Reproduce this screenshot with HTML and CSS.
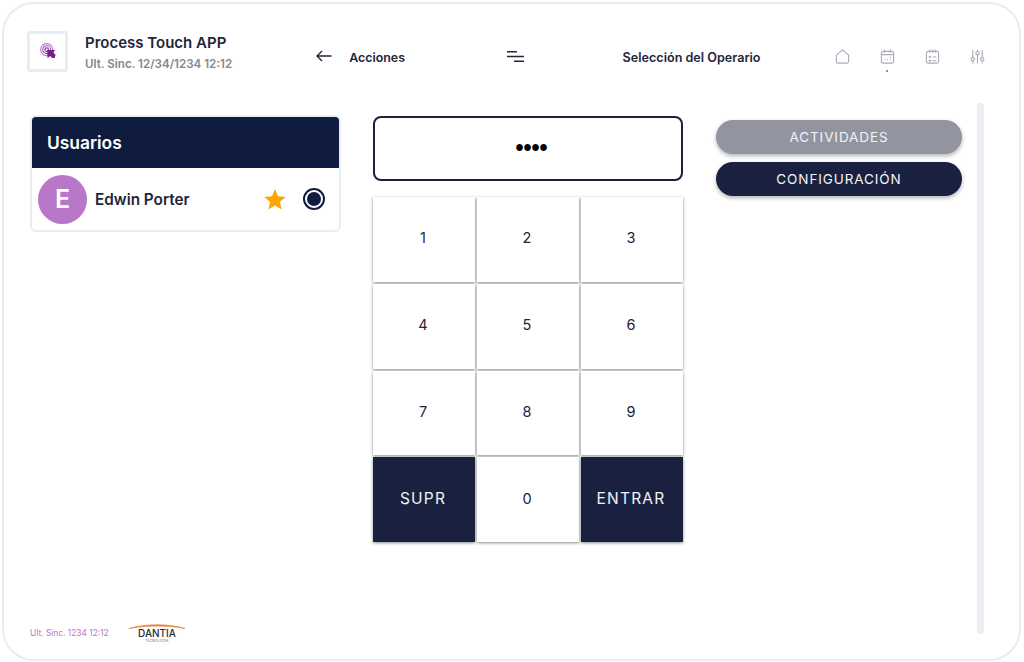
FILE: index.html
```html
<!DOCTYPE html>
<html lang="es">
<head>
    <meta charset="UTF-8">
    <title>Process Touch APP</title>
    <link rel="stylesheet" href="styles.css">
</head>
<body>
    <div class="frame">
        <header class="topbar">
            <div class="brand">
                <div class="logo-box">
                    <svg width="16" height="16" viewBox="0 0 18 18" fill="none">
                        <circle cx="7.5" cy="7.5" r="6.8" stroke="#c07ad2" stroke-width="1.3"/>
                        <circle cx="7.5" cy="7.5" r="4.4" stroke="#a94fc0" stroke-width="1.3"/>
                        <circle cx="7.5" cy="7.5" r="2" stroke="#8d3fa3" stroke-width="1.3"/>
                        <path d="M8 8h9l-2 2.600 2.500 2.600-1 3.800h-3l-1.800-2.300L8.500 17z" fill="#6f1f86"/>
                    </svg>
                </div>
                <div class="brand-text">
                    <div class="app-name">Process Touch APP</div>
                    <div class="app-sync">Ult. Sinc. 12/34/1234 12:12</div>
                </div>
            </div>
            <div class="actions">
                <svg width="16" height="12" viewBox="0 0 16 12" fill="none" stroke="#23253a" stroke-width="1.4">
                    <path d="M15.500 6H1M6 1 1 6l5 5"/>
                </svg>
                <span class="actions-label">Acciones</span>
            </div>
            <svg class="menu-icon" width="17" height="11" viewBox="0 0 17 11" fill="none" stroke="#23253a" stroke-width="1.500">
                <path d="M0 .750h10M0 5.500h17M7 10.250h10"/>
            </svg>
            <div class="screen-title">Selección del Operario</div>
            <nav class="nav-icons">
                <div class="nav-item">
                    <svg width="15" height="15" viewBox="0 0 16 16" fill="none" stroke="#a9abbc" stroke-width="1.2">
                        <path d="M1.500 6.500 8 1l6.500 5.500V13a2 2 0 0 1-2 2h-9a2 2 0 0 1-2-2z"/>
                    </svg>
                </div>
                <div class="nav-item nav-active">
                    <svg width="15" height="15" viewBox="0 0 16 16" fill="none" stroke="#a9abbc" stroke-width="1.2">
                        <rect x="1.500" y="2.500" width="13" height="12.500" rx="2"/>
                        <path d="M1.500 6h13M5 .500v3.500M11 .500v3.500M4.500 11.500h1M7.500 11.500h1M10.500 9h1M10.500 11.500h1"/>
                    </svg>
                </div>
                <div class="nav-item">
                    <svg width="15" height="15" viewBox="0 0 16 16" fill="none" stroke="#a9abbc" stroke-width="1.2">
                        <rect x="1.500" y="2.500" width="13" height="12.500" rx="2"/>
                        <path d="M5 .500v3.500M8 .500v3.500M11 .500v3.500M4 8l1 1 1.500-1.500M8 8.500h4M4 12l1 1 1.500-1.500M8 12.500h4"/>
                    </svg>
                </div>
                <div class="nav-item">
                    <svg width="15" height="15" viewBox="0 0 16 16" fill="none" stroke="#a9abbc" stroke-width="1.2">
                        <path d="M3 1v8M3 13v2.500M8 1v1.500M8 6.500v9M13 1v8M13 13v2.500"/>
                        <circle cx="3" cy="11" r="1.800"/>
                        <circle cx="8" cy="4.500" r="1.800"/>
                        <circle cx="13" cy="11" r="1.800"/>
                    </svg>
                </div>
            </nav>
        </header>

        <main class="content">
            <section class="users">
                <div class="card">
                    <div class="card-head">Usuarios</div>
                    <div class="user-row">
                        <div class="avatar">E</div>
                        <div class="user-name">Edwin Porter</div>
                        <svg class="star" width="22" height="21" viewBox="0 0 22 21">
                            <path d="M11 0l3 7.300 7.700.6-5.900 5 1.900 7.600L11 16.400l-6.700 4.100 1.900-7.600-5.900-5L8 7.300z" fill="#ffa500"/>
                        </svg>
                        <div class="radio"><span class="radio-dot"></span></div>
                    </div>
                </div>
            </section>

            <section class="pad">
                <div class="pin-box">••••</div>
                <div class="keys">
                    <button class="key">1</button>
                    <button class="key">2</button>
                    <button class="key">3</button>
                    <button class="key">4</button>
                    <button class="key">5</button>
                    <button class="key">6</button>
                    <button class="key">7</button>
                    <button class="key">8</button>
                    <button class="key">9</button>
                    <button class="key key-dark">SUPR</button>
                    <button class="key">0</button>
                    <button class="key key-dark">ENTRAR</button>
                </div>
            </section>

            <section class="side">
                <button class="pill pill-muted">ACTIVIDADES</button>
                <button class="pill">CONFIGURACIÓN</button>
            </section>

            <div class="scroll-track"></div>
        </main>

        <footer class="bottom">
            <span class="sync-small">Ult. Sinc. 1234 12:12</span>
            <div class="dantia">
                <svg class="dantia-arc" width="56" height="6" viewBox="0 0 56 6" fill="none">
                    <path d="M0 5.500C16 .500 40 .500 56 5.500 40 2.200 16 2.200 0 5.500z" fill="#ee7b30" stroke="#ee7b30" stroke-width=".6"/>
                </svg>
                <span class="dantia-name">DANTIA</span>
                <span class="dantia-sub">TECNOLOGIA</span>
            </div>
        </footer>
    </div>
</body>
</html>
```

FILE: styles.css
```css
* {
    box-sizing: border-box;
}
html, body {
    margin: 0;
    height: 100%;
    background-color: #fff;
}
body {
    font-family: "Inter", "Liberation Sans", sans-serif;
    color: #23253a;
    overflow: hidden;
}
.frame {
    width: 1019px;
    height: 659px;
    margin: 2px 0 0 2px;
    border: 2px solid #e6eef3;
    border-radius: 32px;
    display: flex;
    flex-direction: column;
    padding: 25px 34px 0 23px;
}

/* top bar */
.topbar {
    display: flex;
    align-items: center;
    height: 44px;
    flex-shrink: 0;
}
.brand {
    display: flex;
    align-items: center;
    width: 290px;
}
.logo-box {
    width: 41px;
    height: 41px;
    border: 3px solid #e6eef3;
    border-radius: 3px;
    display: flex;
    align-items: center;
    justify-content: center;
    margin-right: 17px;
}
.app-name {
    font-size: 15px;
    font-weight: 600;
    line-height: 20px;
    margin-top: 4px;
}
.app-sync {
    font-size: 11.6px;
    font-weight: 600;
    color: #85868f;
    line-height: 18px;
    margin-top: 2px;
}
.actions {
    display: flex;
    align-items: center;
    width: 191px;
    padding-top: 2px;
    margin-top: 8px;
}
.actions-label {
    font-size: 12.4px;
    font-weight: 600;
    margin-left: 17px;
    margin-top: 2px;
}
.menu-icon {
    margin-top: 11px;
}
.screen-title {
    font-size: 12.6px;
    font-weight: 600;
    margin-left: 99px;
    margin-top: 12px;
    width: 213px;
}
.nav-icons {
    display: flex;
    gap: 30px;
}
.nav-item {
    position: relative;
    display: flex;
    width: 15px;
    height: 15px;
    margin-top: 10px;
}
.nav-active::after {
    content: "";
    position: absolute;
    left: 6px;
    top: 21px;
    width: 2px;
    height: 2px;
    background-color: #b877c8;
}

/* main columns */
.content {
    flex: 1;
    display: flex;
    min-height: 0;
    padding-top: 30px;
}
.users {
    width: 311px;
    padding-top: 12px;
    margin-left: 3px;
}
.card {
    border: 2px solid #e6eef3;
    border-radius: 6px;
    overflow: hidden;
}
.card-head {
    background-color: #0f1c3f;
    color: #fff;
    font-size: 17.4px;
    font-weight: 600;
    height: 51px;
    display: flex;
    align-items: center;
    padding-left: 15px;
}
.user-row {
    display: flex;
    align-items: center;
    height: 62px;
    padding-left: 6px;
}
.avatar {
    width: 49px;
    height: 49px;
    border-radius: 50%;
    background-color: #b877c8;
    color: #fff;
    font-size: 25px;
    font-weight: 600;
    display: flex;
    align-items: center;
    justify-content: center;
    flex-shrink: 0;
}
.user-name {
    font-size: 15.3px;
    font-weight: 600;
    margin-left: 8px;
    width: 169px;
}
.star {
    flex-shrink: 0;
}
.radio {
    width: 22px;
    height: 22px;
    border: 2px solid #0f1c3f;
    border-radius: 50%;
    margin-left: 17px;
    display: flex;
    align-items: center;
    justify-content: center;
    flex-shrink: 0;
}
.radio-dot {
    width: 14px;
    height: 14px;
    border-radius: 50%;
    background-color: #0f1c3f;
}

/* keypad */
.pad {
    width: 310px;
    margin-left: 32px;
    padding-top: 13px;
}
.pin-box {
    height: 65px;
    border: 2px solid #1a2140;
    border-radius: 8px;
    display: flex;
    align-items: center;
    justify-content: center;
    font-family: "Liberation Sans", sans-serif;
    font-size: 23px;
    color: #000;
    font-weight: 700;
    padding-left: 7px;
}
.keys {
    display: grid;
    grid-template-columns: repeat(3, 102px);
    grid-auto-rows: 84.75px;
    gap: 2px;
    margin-top: 16px;
}
.key {
    border: none;
    padding: 0 2px 3px 0;
    background-color: #fff;
    color: #23253a;
    font-family: "Inter", "Liberation Sans", sans-serif;
    font-size: 14.5px;
    box-shadow: 0 1px 3px rgba(0, 0, 0, 0.45);
}
.key-dark {
    background-color: #1a2140;
    color: #f2f2f6;
    font-size: 15.5px;
    letter-spacing: 1.2px;
}

/* side buttons */
.side {
    width: 246px;
    margin-left: 33px;
    padding-top: 17px;
    display: flex;
    flex-direction: column;
    gap: 8px;
}
.pill {
    height: 34px;
    border: none;
    border-radius: 17px;
    background-color: #1a2140;
    color: #f4f4f8;
    font-family: "Inter", "Liberation Sans", sans-serif;
    font-size: 13.5px;
    letter-spacing: .9px;
    box-shadow: 0 2px 4px rgba(0, 0, 0, 0.3);
}
.pill-muted {
    background-color: #9294a0;
}
.scroll-track {
    width: 7px;
    height: 531px;
    background-color: #ebeef3;
    border-radius: 3px;
    margin-left: 15px;
}

/* footer */
.bottom {
    display: flex;
    align-items: center;
    height: 40px;
    flex-shrink: 0;
    padding: 0 0 12px 3px;
}
.sync-small {
    font-size: 8.4px;
    color: #b877c8;
    width: 99px;
}
.dantia {
    position: relative;
    display: flex;
    flex-direction: column;
    align-items: center;
    width: 56px;
    padding-top: 4px;
}
.dantia-arc {
    position: absolute;
    top: 0;
    left: 0;
}
.dantia-name {
    font-size: 10px;
    font-weight: 500;
    color: #2a2a2e;
    line-height: 12px;
}
.dantia-sub {
    font-size: 3px;
    color: #555;
    line-height: 4px;
    letter-spacing: .4px;
}
```
